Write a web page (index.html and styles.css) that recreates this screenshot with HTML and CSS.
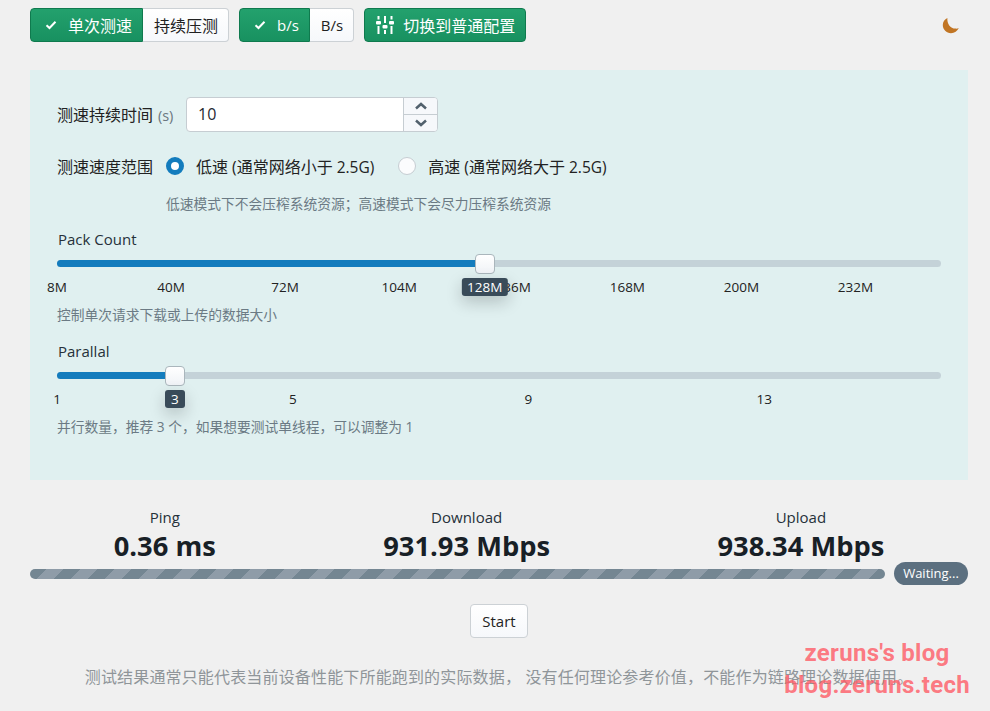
FILE: index.html
```html
<!DOCTYPE html>
<html lang="zh-CN">
<head>
<meta charset="utf-8">
<title>Speedtest</title>
<link rel="stylesheet" href="styles.css">
</head>
<body>
<div class="page">
  <div class="toolbar">
    <div class="btn-group">
      <span class="btn on"><svg class="check" viewBox="0 0 12 10"><path d="M1.500 5.200 4.500 8 10.500 1.800" /></svg><span class="zh">单次测速</span></span>
      <span class="btn"><span class="zh">持续压测</span></span>
    </div>
    <div class="btn-group">
      <span class="btn on"><svg class="check" viewBox="0 0 12 10"><path d="M1.500 5.200 4.500 8 10.500 1.800" /></svg>b/s</span>
      <span class="btn">B/s</span>
    </div>
    <span class="btn on solo">
      <svg class="sliders" viewBox="0 0 18 18"><path d="M2.500 0v3.500M2.500 10v8M9 0v7M9 14v4M15.500 0v3.500M15.500 10v8" /><rect x="0" y="5" width="5" height="3.500" rx="1" /><rect x="6.500" y="9" width="5" height="3.500" rx="1" /><rect x="13" y="5" width="5" height="3.500" rx="1" /></svg><span class="zh">切换到普通配置</span>
    </span>
    <svg class="moon" viewBox="0 0 18 18"><path d="M5.400 1C2.600 2.300 .8 5 .8 8c0 4.600 3.700 8.200 8.200 8.200 3.500 0 6.400-2 7.800-5.100-1 .4-2.100.6-3.300.5C8.300 11.600 4.800 6.700 5.400 1Z" /></svg>
  </div>

  <section class="panel">
    <div class="row duration">
      <label class="row-label"><span class="zh">测速持续时间</span> <small>(s)</small></label>
      <div class="number">
        <span class="number-value">10</span>
        <span class="spin">
          <span class="spin-btn"><svg viewBox="0 0 14 8"><path d="M2 6.500 7 2l5 4.500" /></svg></span>
          <span class="spin-btn"><svg viewBox="0 0 14 8"><path d="M2 1.500 7 6l5-4.500" /></svg></span>
        </span>
      </div>
    </div>
    <div class="row range">
      <label class="row-label zh">测速速度范围</label>
      <span class="radio checked"></span><span class="radio-text"><span class="zh">低速</span> (<span class="zh">通常网络小于</span> 2.5G)</span>
      <span class="radio second"></span><span class="radio-text"><span class="zh">高速</span> (<span class="zh">通常网络大于</span> 2.5G)</span>
    </div>
    <p class="help indent">低速模式下不会压榨系统资源；高速模式下会尽力压榨系统资源</p>

    <div class="field pack">
      <div class="field-label">Pack Count</div>
      <div class="slider">
        <div class="fill" style="width:48.390%"></div>
        <div class="thumb" style="left:48.390%"></div>
        <div class="mark" style="left:0%">8M</div>
        <div class="mark" style="left:12.900%">40M</div>
        <div class="mark" style="left:25.810%">72M</div>
        <div class="mark" style="left:38.710%">104M</div>
        <div class="mark" style="left:51.610%">136M</div>
        <div class="mark" style="left:64.520%">168M</div>
        <div class="mark" style="left:77.420%">200M</div>
        <div class="mark" style="left:90.320%">232M</div>
        <div class="tip wide" style="left:48.390%">128M</div>
      </div>
      <p class="help">控制单次请求下载或上传的数据大小</p>
    </div>

    <div class="field parallel">
      <div class="field-label">Parallal</div>
      <div class="slider">
        <div class="fill" style="width:13.330%"></div>
        <div class="thumb" style="left:13.330%"></div>
        <div class="mark" style="left:0%">1</div>
        <div class="mark" style="left:26.670%">5</div>
        <div class="mark" style="left:53.330%">9</div>
        <div class="mark" style="left:80%">13</div>
        <div class="tip" style="left:13.330%">3</div>
      </div>
      <p class="help">并行数量，推荐 3 个，如果想要测试单线程，可以调整为 1</p>
    </div>
  </section>

  <section class="stats">
    <div class="stat"><div class="stat-label">Ping</div><div class="stat-value">0.36 ms</div></div>
    <div class="stat"><div class="stat-label">Download</div><div class="stat-value">931.93 Mbps</div></div>
    <div class="stat"><div class="stat-label">Upload</div><div class="stat-value">938.34 Mbps</div></div>
  </section>

  <div class="progress-row">
    <div class="progress"></div>
    <span class="badge">Waiting...</span>
  </div>

  <div class="actions"><span class="start">Start</span></div>
  <p class="note">测试结果通常只能代表当前设备性能下所能跑到的实际数据， 没有任何理论参考价值，不能作为链路理论数据使用。</p>
</div>
<div class="watermark"><div>zeruns's blog</div><div>blog.zeruns.tech</div></div>
</body>
</html>
```

FILE: styles.css
```css
* { box-sizing: border-box; }
html, body { margin: 0; height: 711px; overflow: hidden; }
body {
  position: relative;
  background: #f0f0f0;
  color: #1f2933;
  font-family: "Open Sans", "Noto Sans CJK SC", sans-serif;
  font-size: 15px;
}
.zh { font-size: 16px; }
.page { padding: 8px 22px 0 30px; }

.toolbar { display: flex; align-items: center; gap: 10px; height: 34px; position: relative; }
.btn-group { display: flex; }
.btn {
  display: flex;
  align-items: center;
  height: 34px;
  padding: 0 10px 0 11px;
  background: linear-gradient(#fff, #f6f8fb);
  border: 1px solid #ccd1d5;
  border-left: 0;
  border-radius: 0 4px 4px 0;
  color: #222;
  white-space: nowrap;
}
.btn.on {
  background: linear-gradient(#23a16d, #189160);
  border: 1px solid #0f7a4e;
  border-radius: 4px 0 0 4px;
  color: #fff;
}
.btn.solo { border-radius: 4px; padding: 0 10px 0 11px; }
.check { width: 12px; height: 10px; margin: 0 11px 0 3px; }
.check path { fill: none; stroke: #fff; stroke-width: 2; }
.sliders { width: 18px; height: 18px; margin-right: 9px; }
.sliders path { stroke: #fff; stroke-width: 2; fill: none; }
.sliders rect { fill: #fff; }
.moon { position: absolute; right: 8px; top: 9px; width: 18px; height: 18px; fill: #c17524; }

.panel {
  height: 410px;
  margin-top: 28px;
  padding: 27px 27px 0;
  background: #e0f0f0;
}
.row { display: flex; align-items: center; }
.row-label { color: #222; margin-right: 13px; white-space: nowrap; }
.row-label small { margin-left: 1px; font-size: 14.500px; color: #6b7780; }
.duration .row-label { width: 116px; margin-bottom: 2px; }
.number {
  display: flex;
  width: 252px;
  height: 35px;
  background: #fff;
  border: 1px solid #c6cdd2;
  border-radius: 4px;
  overflow: hidden;
}
.number-value { flex: 1; padding: 0 11px; line-height: 33px; font-size: 16px; }
.spin { display: flex; flex-direction: column; width: 34px; border-left: 1px solid #c6cdd2; }
.spin-btn { flex: 1; display: flex; align-items: center; justify-content: center; background: #f6f8fb; }
.spin-btn + .spin-btn { border-top: 1px solid #c6cdd2; }
.spin-btn svg { width: 14px; height: 8px; fill: none; stroke: #52616d; stroke-width: 2.500; }

.range { margin-top: 20px; height: 28px; }
.radio {
  width: 18px;
  height: 18px;
  border-radius: 50%;
  background: #fbfcfd;
  border: 1px solid #c6cdd2;
  margin-right: 12px;
}
.radio.checked { background: #fff; border: 5px solid #137cbd; }
.radio.second { margin-left: 24px; }
.radio-text { color: #222; white-space: nowrap; font-size: 15.500px; }
.help { margin: 0; font-size: 13.750px; color: #6b7a84; line-height: 18px; white-space: nowrap; }
.indent { margin: 15px 0 0 109px; }

.field-label { line-height: 20px; color: #26313a; padding-left: 1px; }
.pack { margin-top: 16px; }
.parallel { margin-top: 17px; }
.slider { position: relative; height: 49px; margin-top: 8px; }
.slider::before {
  content: "";
  position: absolute;
  left: 0;
  right: 0;
  top: 3px;
  height: 7px;
  border-radius: 4px;
  background: #c4d2d8;
}
.fill { position: absolute; left: 0; top: 3px; height: 7px; border-radius: 4px 0 0 4px; background: #137cbd; }
.thumb {
  position: absolute;
  top: -3px;
  width: 20px;
  height: 20px;
  margin-left: -10px;
  border: 1px solid #aab6bc;
  border-radius: 4px;
  background: linear-gradient(#fff, #f0f3f7);
  z-index: 2;
}
.mark {
  position: absolute;
  top: 21px;
  transform: translateX(-50%);
  font-size: 13.500px;
  line-height: 18px;
  color: #222;
}
.tip {
  position: absolute;
  top: 21px;
  height: 18px;
  min-width: 20px;
  padding: 0 5.500px;
  transform: translateX(-50%);
  border-radius: 3px;
  background: #394b59;
  color: #fff;
  font-size: 13.500px;
  line-height: 18px;
  text-align: center;
  box-shadow: 0 6px 16px rgba(16, 22, 26, .22);
  z-index: 3;
}
.stats { display: flex; justify-content: space-around; margin-top: 27px; text-align: center; }
.stat-label { line-height: 21px; color: #26313a; }
.stat-value { font-size: 27.300px; font-weight: 700; line-height: 35px; color: #182026; white-space: nowrap; }

.progress-row { display: flex; align-items: center; gap: 9px; margin-top: -1px; height: 23px; }
.progress {
  flex: 1;
  height: 10px;
  border-radius: 5px;
  background: repeating-linear-gradient(-45deg, #748692 0 12px, #8f9ca8 12px 24px);
}
.badge {
  width: 74px;
  height: 23px;
  border-radius: 12px;
  background: #5c7080;
  color: #fff;
  font-size: 13px;
  line-height: 23px;
  text-align: center;
}
.actions { display: flex; justify-content: center; margin-top: 19px; }
.start {
  width: 58px;
  height: 34px;
  background: linear-gradient(#fff, #f6f8fb);
  border: 1px solid #ccd1d5;
  border-radius: 4px;
  line-height: 32px;
  text-align: center;
  color: #222;
}
.note { margin: 28px 0 0; text-align: center; font-size: 16px; line-height: 22px; letter-spacing: .16px; color: #8f9599; white-space: nowrap; }

.watermark {
  position: absolute;
  right: 20px;
  top: 637px;
  text-align: center;
  font-family: "Roboto", sans-serif;
  font-weight: 700;
  color: rgba(255, 90, 100, .8);
  font-size: 24px;
  letter-spacing: .3px;
  line-height: 32px;
}
```
